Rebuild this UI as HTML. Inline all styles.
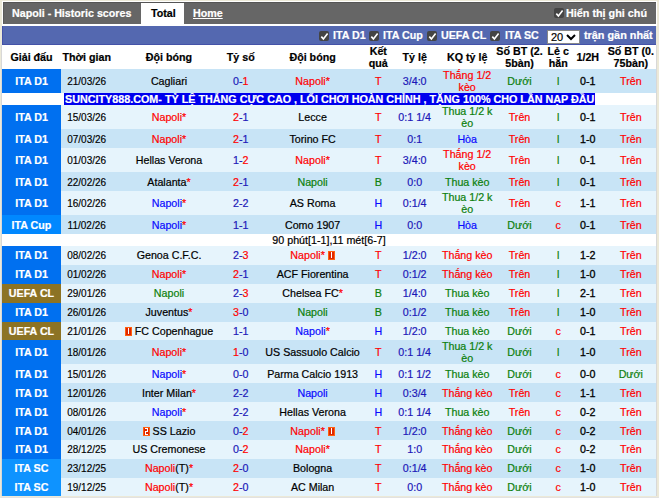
<!DOCTYPE html><html><head><meta charset="utf-8"><style>
*{margin:0;padding:0;box-sizing:border-box}
html,body{width:659px;height:498px;overflow:hidden;background:#ece9d8;font-family:"Liberation Sans",sans-serif;font-size:10.7px;color:#000;-webkit-text-stroke:0.2px}
.a{position:absolute}
.row{position:absolute;left:2px;width:654px}
.c{position:absolute;top:0;height:100%;display:flex;align-items:center;justify-content:center;text-align:center;white-space:nowrap;line-height:12px}
.lg{left:0;width:59px;color:#fff;font-weight:bold}
.d1{background:#c8e4f6}.d2{background:#e6f4fc}
.rc{display:inline-block;vertical-align:-1px}
.cb{position:absolute;width:10px;height:10px;background:#444;border-radius:2px}
.cb svg{position:absolute;left:1px;top:1px}
.hd .c{font-weight:bold}
.in{font-weight:inherit;display:block}
.c .in{position:relative;top:var(--dy)}
.h2{color:#000;-webkit-text-stroke:0.3px #000}
</style></head><body>

<div class="a" style="left:1px;top:45px;width:1px;height:451px;background:#d8d8d8"></div>
<div class="a" style="left:656px;top:45px;width:1px;height:451px;background:#d8d8d8"></div>
<div class="a" style="left:2px;top:1px;width:655px;height:25px;background:#fff"></div>
<div class="a" style="left:3px;top:2px;width:653px;height:22px;background:#666;border-top:1px solid #555;border-left:1px solid #5a5a5a"></div>
<div class="a" style="left:141px;top:3px;width:43px;height:22px;background:#fff"></div>
<div class="a" style="left:12px;top:6px;font-weight:bold;color:#fff;font-size:10.7px;line-height:14px">Napoli - Historic scores</div>
<div class="a" style="left:151px;top:6px;font-weight:bold;color:#000;font-size:10.7px;line-height:14px">Total</div>
<div class="a" style="left:193px;top:6px;font-weight:bold;color:#fff;font-size:10.7px;line-height:14px;text-decoration:underline">Home</div>
<div class="cb" style="left:554px;top:8px"><svg width="9" height="9" viewBox="0 0 9 9" style="left:0.5px;top:0.5px"><path d="M1.3 4.6 L3.4 6.9 L7.6 1.6" stroke="#fff" stroke-width="1.6" fill="none"/></svg></div>
<div class="a" style="left:566px;top:6px;font-weight:bold;color:#fff;font-size:10.8px;line-height:14px">Hiển thị ghi chú</div>
<div class="a" style="left:2px;top:26px;width:654px;height:19px;background:#5468b0;border-left:1px solid #4452a8;border-bottom:1px solid #4452a8"></div>
<div class="cb" style="left:319px;top:31px"><svg width="9" height="9" viewBox="0 0 9 9" style="left:0.5px;top:0.5px"><path d="M1.3 4.6 L3.4 6.9 L7.6 1.6" stroke="#fff" stroke-width="1.6" fill="none"/></svg></div>
<div class="a" style="left:333px;top:28px;font-weight:bold;color:#fff;line-height:14px">ITA D1</div>
<div class="cb" style="left:369px;top:31px"><svg width="9" height="9" viewBox="0 0 9 9" style="left:0.5px;top:0.5px"><path d="M1.3 4.6 L3.4 6.9 L7.6 1.6" stroke="#fff" stroke-width="1.6" fill="none"/></svg></div>
<div class="a" style="left:383px;top:28px;font-weight:bold;color:#fff;line-height:14px">ITA Cup</div>
<div class="cb" style="left:427px;top:31px"><svg width="9" height="9" viewBox="0 0 9 9" style="left:0.5px;top:0.5px"><path d="M1.3 4.6 L3.4 6.9 L7.6 1.6" stroke="#fff" stroke-width="1.6" fill="none"/></svg></div>
<div class="a" style="left:441px;top:28px;font-weight:bold;color:#fff;line-height:14px">UEFA CL</div>
<div class="cb" style="left:490px;top:31px"><svg width="9" height="9" viewBox="0 0 9 9" style="left:0.5px;top:0.5px"><path d="M1.3 4.6 L3.4 6.9 L7.6 1.6" stroke="#fff" stroke-width="1.6" fill="none"/></svg></div>
<div class="a" style="left:505px;top:28px;font-weight:bold;color:#fff;line-height:14px">ITA SC</div>
<div class="a" style="left:547px;top:30px;width:33px;height:14px;background:#fff;border:1px solid #888"></div>
<div class="a" style="left:551px;top:30px;color:#000;line-height:14px;font-size:11px">20</div>
<svg class="a" style="left:566px;top:34px" width="10" height="7" viewBox="0 0 10 7"><path d="M1 1 L5 5 L9 1" stroke="#000" stroke-width="2" fill="none"/></svg>
<div class="a" style="left:584px;top:28px;font-weight:bold;color:#fff;font-size:10.85px;line-height:14px">trận gần nhất</div>
<div class="a" style="left:2px;top:45px;width:654px;height:451px;background:#fff"></div>
<div class="row hd" style="top:45px;height:24px">
<div class="c" style="left:0.0px;width:59px">Giải đấu</div>
<div class="c" style="left:58.7px;width:52px">Thời gian</div>
<div class="c" style="left:111.0px;width:112px">Đội bóng</div>
<div class="c" style="left:222.8px;width:32px">Tỷ số</div>
<div class="c" style="left:255.1px;width:111px">Đội bóng</div>
<div class="c" style="left:365.8px;width:21px">Kết<br>quả</div>
<div class="c" style="left:387.2px;width:51px">Tỷ lệ</div>
<div class="c" style="left:437.7px;width:55px">KQ tỷ lệ</div>
<div class="c" style="left:492.5px;width:50px">Số BT (2.<br>5bàn)</div>
<div class="c" style="left:542.7px;width:27px">Lẻ c<br>hẵn</div>
<div class="c" style="left:570.3px;width:31px">1/2H</div>
<div class="c" style="left:602.8px;width:52px">Số BT (0.<br>75bàn)</div>
</div>
<div class="a" style="left:64px;top:93px;height:12px;background:#0000ee;color:#fff;font-weight:bold;font-size:10.78px;line-height:12px;white-space:nowrap;padding:0 1px">SUNCITY888.COM- TỶ LỆ THẮNG CỰC CAO , LỐI CHƠI HOÀN CHỈNH , TẶNG 100% CHO LẦN NẠP ĐẦU</div>
<div class="a" style="left:2px;top:234px;width:654px;height:12px;text-align:center;line-height:12px;white-space:nowrap">90 phút[1-1],11 mét[6-7]</div>
<div class="row d1" style="top:69px;height:24px;--dy:0px">
<div class="c lg" style="background:#0070f0"><b class="in">ITA D1</b></div>
<div class="c" style="left:58.7px;width:52px;font-size:10px;padding-top:2px;-webkit-text-stroke:0.15px;"><b class="in">21/03/26</b></div>
<div class="c" style="left:111.0px;width:112px;"><b class="in"><span style="color:#000000;">Cagliari</span></b></div>
<div class="c" style="left:222.8px;width:32px;"><b class="in"><span style="color:#1c18b8;">0-</span><span style="color:#ff0000;">1</span></b></div>
<div class="c" style="left:255.1px;width:111px;"><b class="in"><span style="color:#ff0000;">Napoli</span><span style="color:#ff0000;">*</span></b></div>
<div class="c" style="left:365.8px;width:21px;"><b class="in"><span style="color:#ff0000;">T</span></b></div>
<div class="c" style="left:387.2px;width:51px;"><b class="in"><span style="color:#1c18b8;">3/4:0</span></b></div>
<div class="c" style="left:437.7px;width:55px;"><b class="in"><span style="color:#ff0000;">Thắng 1/2<br>kèo</span></b></div>
<div class="c" style="left:492.5px;width:50px;"><b class="in"><span style="color:#0c800c;">Dưới</span></b></div>
<div class="c" style="left:542.7px;width:27px;"><b class="in"><span style="color:#0c800c;">l</span></b></div>
<div class="c" style="left:570.3px;width:31px;"><b class="in"><span class="h2">0-1</span></b></div>
<div class="c" style="left:602.8px;width:52px;"><b class="in"><span style="color:#ff0000;">Trên</span></b></div>
</div>
<div class="row d2" style="top:105px;height:24px;--dy:0px">
<div class="c lg" style="background:#0070f0"><b class="in">ITA D1</b></div>
<div class="c" style="left:58.7px;width:52px;font-size:10px;padding-top:2px;-webkit-text-stroke:0.15px;"><b class="in">15/03/26</b></div>
<div class="c" style="left:111.0px;width:112px;"><b class="in"><span style="color:#ff0000;">Napoli</span><span style="color:#ff0000;">*</span></b></div>
<div class="c" style="left:222.8px;width:32px;"><b class="in"><span style="color:#ff0000;">2</span><span style="color:#1c18b8;">-1</span></b></div>
<div class="c" style="left:255.1px;width:111px;"><b class="in"><span style="color:#000000;">Lecce</span></b></div>
<div class="c" style="left:365.8px;width:21px;"><b class="in"><span style="color:#ff0000;">T</span></b></div>
<div class="c" style="left:387.2px;width:51px;"><b class="in"><span style="color:#1c18b8;">0:1 1/4</span></b></div>
<div class="c" style="left:437.7px;width:55px;"><b class="in"><span style="color:#0c800c;">Thua 1/2 k<br>èo</span></b></div>
<div class="c" style="left:492.5px;width:50px;"><b class="in"><span style="color:#ff0000;">Trên</span></b></div>
<div class="c" style="left:542.7px;width:27px;"><b class="in"><span style="color:#0c800c;">l</span></b></div>
<div class="c" style="left:570.3px;width:31px;"><b class="in"><span class="h2">0-1</span></b></div>
<div class="c" style="left:602.8px;width:52px;"><b class="in"><span style="color:#ff0000;">Trên</span></b></div>
</div>
<div class="row d1" style="top:129px;height:19px;--dy:0px">
<div class="c lg" style="background:#0070f0"><b class="in">ITA D1</b></div>
<div class="c" style="left:58.7px;width:52px;font-size:10px;padding-top:2px;-webkit-text-stroke:0.15px;"><b class="in">07/03/26</b></div>
<div class="c" style="left:111.0px;width:112px;"><b class="in"><span style="color:#ff0000;">Napoli</span><span style="color:#ff0000;">*</span></b></div>
<div class="c" style="left:222.8px;width:32px;"><b class="in"><span style="color:#ff0000;">2</span><span style="color:#1c18b8;">-1</span></b></div>
<div class="c" style="left:255.1px;width:111px;"><b class="in"><span style="color:#000000;">Torino FC</span></b></div>
<div class="c" style="left:365.8px;width:21px;"><b class="in"><span style="color:#ff0000;">T</span></b></div>
<div class="c" style="left:387.2px;width:51px;"><b class="in"><span style="color:#1c18b8;">0:1</span></b></div>
<div class="c" style="left:437.7px;width:55px;"><b class="in"><span style="color:#0a0aff;">Hòa</span></b></div>
<div class="c" style="left:492.5px;width:50px;"><b class="in"><span style="color:#ff0000;">Trên</span></b></div>
<div class="c" style="left:542.7px;width:27px;"><b class="in"><span style="color:#0c800c;">l</span></b></div>
<div class="c" style="left:570.3px;width:31px;"><b class="in"><span class="h2">1-0</span></b></div>
<div class="c" style="left:602.8px;width:52px;"><b class="in"><span style="color:#ff0000;">Trên</span></b></div>
</div>
<div class="row d2" style="top:148px;height:24px;--dy:0px">
<div class="c lg" style="background:#0070f0"><b class="in">ITA D1</b></div>
<div class="c" style="left:58.7px;width:52px;font-size:10px;padding-top:2px;-webkit-text-stroke:0.15px;"><b class="in">01/03/26</b></div>
<div class="c" style="left:111.0px;width:112px;"><b class="in"><span style="color:#000000;">Hellas Verona</span></b></div>
<div class="c" style="left:222.8px;width:32px;"><b class="in"><span style="color:#1c18b8;">1-</span><span style="color:#ff0000;">2</span></b></div>
<div class="c" style="left:255.1px;width:111px;"><b class="in"><span style="color:#ff0000;">Napoli</span><span style="color:#ff0000;">*</span></b></div>
<div class="c" style="left:365.8px;width:21px;"><b class="in"><span style="color:#ff0000;">T</span></b></div>
<div class="c" style="left:387.2px;width:51px;"><b class="in"><span style="color:#1c18b8;">3/4:0</span></b></div>
<div class="c" style="left:437.7px;width:55px;"><b class="in"><span style="color:#ff0000;">Thắng 1/2<br>kèo</span></b></div>
<div class="c" style="left:492.5px;width:50px;"><b class="in"><span style="color:#ff0000;">Trên</span></b></div>
<div class="c" style="left:542.7px;width:27px;"><b class="in"><span style="color:#0c800c;">l</span></b></div>
<div class="c" style="left:570.3px;width:31px;"><b class="in"><span class="h2">0-1</span></b></div>
<div class="c" style="left:602.8px;width:52px;"><b class="in"><span style="color:#ff0000;">Trên</span></b></div>
</div>
<div class="row d1" style="top:172px;height:19px;--dy:0px">
<div class="c lg" style="background:#0070f0"><b class="in">ITA D1</b></div>
<div class="c" style="left:58.7px;width:52px;font-size:10px;padding-top:2px;-webkit-text-stroke:0.15px;"><b class="in">22/02/26</b></div>
<div class="c" style="left:111.0px;width:112px;"><b class="in"><span style="color:#000000;">Atalanta</span><span style="color:#ff0000;">*</span></b></div>
<div class="c" style="left:222.8px;width:32px;"><b class="in"><span style="color:#ff0000;">2</span><span style="color:#1c18b8;">-1</span></b></div>
<div class="c" style="left:255.1px;width:111px;"><b class="in"><span style="color:#0c800c;">Napoli</span></b></div>
<div class="c" style="left:365.8px;width:21px;"><b class="in"><span style="color:#0c800c;">B</span></b></div>
<div class="c" style="left:387.2px;width:51px;"><b class="in"><span style="color:#1c18b8;">0:0</span></b></div>
<div class="c" style="left:437.7px;width:55px;"><b class="in"><span style="color:#0c800c;">Thua kèo</span></b></div>
<div class="c" style="left:492.5px;width:50px;"><b class="in"><span style="color:#ff0000;">Trên</span></b></div>
<div class="c" style="left:542.7px;width:27px;"><b class="in"><span style="color:#0c800c;">l</span></b></div>
<div class="c" style="left:570.3px;width:31px;"><b class="in"><span class="h2">0-1</span></b></div>
<div class="c" style="left:602.8px;width:52px;"><b class="in"><span style="color:#ff0000;">Trên</span></b></div>
</div>
<div class="row d2" style="top:191px;height:24px;--dy:0px">
<div class="c lg" style="background:#0070f0"><b class="in">ITA D1</b></div>
<div class="c" style="left:58.7px;width:52px;font-size:10px;padding-top:2px;-webkit-text-stroke:0.15px;"><b class="in">16/02/26</b></div>
<div class="c" style="left:111.0px;width:112px;"><b class="in"><span style="color:#0a0aff;">Napoli</span><span style="color:#ff0000;">*</span></b></div>
<div class="c" style="left:222.8px;width:32px;"><b class="in"><span style="color:#1c18b8;">2-2</span></b></div>
<div class="c" style="left:255.1px;width:111px;"><b class="in"><span style="color:#000000;">AS Roma</span></b></div>
<div class="c" style="left:365.8px;width:21px;"><b class="in"><span style="color:#0a0aff;">H</span></b></div>
<div class="c" style="left:387.2px;width:51px;"><b class="in"><span style="color:#1c18b8;">0:1/4</span></b></div>
<div class="c" style="left:437.7px;width:55px;"><b class="in"><span style="color:#0c800c;">Thua 1/2 k<br>èo</span></b></div>
<div class="c" style="left:492.5px;width:50px;"><b class="in"><span style="color:#ff0000;">Trên</span></b></div>
<div class="c" style="left:542.7px;width:27px;"><b class="in"><span style="color:#ff0000;">c</span></b></div>
<div class="c" style="left:570.3px;width:31px;"><b class="in"><span class="h2">1-1</span></b></div>
<div class="c" style="left:602.8px;width:52px;"><b class="in"><span style="color:#ff0000;">Trên</span></b></div>
</div>
<div class="row d1" style="top:215px;height:19px;--dy:0px">
<div class="c lg" style="background:#0088ff"><b class="in">ITA Cup</b></div>
<div class="c" style="left:58.7px;width:52px;font-size:10px;padding-top:2px;-webkit-text-stroke:0.15px;"><b class="in">11/02/26</b></div>
<div class="c" style="left:111.0px;width:112px;"><b class="in"><span style="color:#0a0aff;">Napoli</span><span style="color:#ff0000;">*</span></b></div>
<div class="c" style="left:222.8px;width:32px;"><b class="in"><span style="color:#1c18b8;">1-1</span></b></div>
<div class="c" style="left:255.1px;width:111px;"><b class="in"><span style="color:#000000;">Como 1907</span></b></div>
<div class="c" style="left:365.8px;width:21px;"><b class="in"><span style="color:#0a0aff;">H</span></b></div>
<div class="c" style="left:387.2px;width:51px;"><b class="in"><span style="color:#1c18b8;">0:0</span></b></div>
<div class="c" style="left:437.7px;width:55px;"><b class="in"><span style="color:#0a0aff;">Hòa</span></b></div>
<div class="c" style="left:492.5px;width:50px;"><b class="in"><span style="color:#0c800c;">Dưới</span></b></div>
<div class="c" style="left:542.7px;width:27px;"><b class="in"><span style="color:#ff0000;">c</span></b></div>
<div class="c" style="left:570.3px;width:31px;"><b class="in"><span class="h2">0-1</span></b></div>
<div class="c" style="left:602.8px;width:52px;"><b class="in"><span style="color:#ff0000;">Trên</span></b></div>
</div>
<div class="row d2" style="top:246px;height:19px;--dy:-1px">
<div class="c lg" style="background:#0070f0"><b class="in">ITA D1</b></div>
<div class="c" style="left:58.7px;width:52px;font-size:10px;padding-top:2px;-webkit-text-stroke:0.15px;"><b class="in">08/02/26</b></div>
<div class="c" style="left:111.0px;width:112px;"><b class="in"><span style="color:#000000;">Genoa C.F.C.</span></b></div>
<div class="c" style="left:222.8px;width:32px;"><b class="in"><span style="color:#1c18b8;">2-</span><span style="color:#ff0000;">3</span></b></div>
<div class="c" style="left:255.1px;width:111px;"><b class="in"><span style="color:#ff0000;">Napoli</span><span style="color:#ff0000;">*</span> <svg class="rc" width="7" height="9" viewBox="0 0 7 9"><rect width="7" height="9" fill="#ff6010"/><rect x="1" y="1" width="5" height="7" fill="#e02800"/><rect x="3" y="1" width="1" height="6" fill="#fff"/></svg></b></div>
<div class="c" style="left:365.8px;width:21px;"><b class="in"><span style="color:#ff0000;">T</span></b></div>
<div class="c" style="left:387.2px;width:51px;"><b class="in"><span style="color:#1c18b8;">1/2:0</span></b></div>
<div class="c" style="left:437.7px;width:55px;"><b class="in"><span style="color:#ff0000;">Thắng kèo</span></b></div>
<div class="c" style="left:492.5px;width:50px;"><b class="in"><span style="color:#ff0000;">Trên</span></b></div>
<div class="c" style="left:542.7px;width:27px;"><b class="in"><span style="color:#0c800c;">l</span></b></div>
<div class="c" style="left:570.3px;width:31px;"><b class="in"><span class="h2">1-2</span></b></div>
<div class="c" style="left:602.8px;width:52px;"><b class="in"><span style="color:#ff0000;">Trên</span></b></div>
</div>
<div class="row d1" style="top:265px;height:19px;--dy:-1px">
<div class="c lg" style="background:#0070f0"><b class="in">ITA D1</b></div>
<div class="c" style="left:58.7px;width:52px;font-size:10px;padding-top:2px;-webkit-text-stroke:0.15px;"><b class="in">01/02/26</b></div>
<div class="c" style="left:111.0px;width:112px;"><b class="in"><span style="color:#ff0000;">Napoli</span><span style="color:#ff0000;">*</span></b></div>
<div class="c" style="left:222.8px;width:32px;"><b class="in"><span style="color:#ff0000;">2</span><span style="color:#1c18b8;">-1</span></b></div>
<div class="c" style="left:255.1px;width:111px;"><b class="in"><span style="color:#000000;">ACF Fiorentina</span></b></div>
<div class="c" style="left:365.8px;width:21px;"><b class="in"><span style="color:#ff0000;">T</span></b></div>
<div class="c" style="left:387.2px;width:51px;"><b class="in"><span style="color:#1c18b8;">0:1/2</span></b></div>
<div class="c" style="left:437.7px;width:55px;"><b class="in"><span style="color:#ff0000;">Thắng kèo</span></b></div>
<div class="c" style="left:492.5px;width:50px;"><b class="in"><span style="color:#ff0000;">Trên</span></b></div>
<div class="c" style="left:542.7px;width:27px;"><b class="in"><span style="color:#0c800c;">l</span></b></div>
<div class="c" style="left:570.3px;width:31px;"><b class="in"><span class="h2">1-0</span></b></div>
<div class="c" style="left:602.8px;width:52px;"><b class="in"><span style="color:#ff0000;">Trên</span></b></div>
</div>
<div class="row d2" style="top:284px;height:19px;--dy:-1px">
<div class="c lg" style="background:#8c7324"><b class="in">UEFA CL</b></div>
<div class="c" style="left:58.7px;width:52px;font-size:10px;padding-top:2px;-webkit-text-stroke:0.15px;"><b class="in">29/01/26</b></div>
<div class="c" style="left:111.0px;width:112px;"><b class="in"><span style="color:#0c800c;">Napoli</span></b></div>
<div class="c" style="left:222.8px;width:32px;"><b class="in"><span style="color:#1c18b8;">2-</span><span style="color:#ff0000;">3</span></b></div>
<div class="c" style="left:255.1px;width:111px;"><b class="in"><span style="color:#000000;">Chelsea FC</span><span style="color:#ff0000;">*</span></b></div>
<div class="c" style="left:365.8px;width:21px;"><b class="in"><span style="color:#0c800c;">B</span></b></div>
<div class="c" style="left:387.2px;width:51px;"><b class="in"><span style="color:#1c18b8;">1/4:0</span></b></div>
<div class="c" style="left:437.7px;width:55px;"><b class="in"><span style="color:#0c800c;">Thua kèo</span></b></div>
<div class="c" style="left:492.5px;width:50px;"><b class="in"><span style="color:#ff0000;">Trên</span></b></div>
<div class="c" style="left:542.7px;width:27px;"><b class="in"><span style="color:#0c800c;">l</span></b></div>
<div class="c" style="left:570.3px;width:31px;"><b class="in"><span class="h2">2-1</span></b></div>
<div class="c" style="left:602.8px;width:52px;"><b class="in"><span style="color:#ff0000;">Trên</span></b></div>
</div>
<div class="row d1" style="top:303px;height:19px;--dy:-1px">
<div class="c lg" style="background:#0070f0"><b class="in">ITA D1</b></div>
<div class="c" style="left:58.7px;width:52px;font-size:10px;padding-top:2px;-webkit-text-stroke:0.15px;"><b class="in">26/01/26</b></div>
<div class="c" style="left:111.0px;width:112px;"><b class="in"><span style="color:#000000;">Juventus</span><span style="color:#ff0000;">*</span></b></div>
<div class="c" style="left:222.8px;width:32px;"><b class="in"><span style="color:#ff0000;">3</span><span style="color:#1c18b8;">-0</span></b></div>
<div class="c" style="left:255.1px;width:111px;"><b class="in"><span style="color:#0c800c;">Napoli</span></b></div>
<div class="c" style="left:365.8px;width:21px;"><b class="in"><span style="color:#0c800c;">B</span></b></div>
<div class="c" style="left:387.2px;width:51px;"><b class="in"><span style="color:#1c18b8;">0:1/2</span></b></div>
<div class="c" style="left:437.7px;width:55px;"><b class="in"><span style="color:#0c800c;">Thua kèo</span></b></div>
<div class="c" style="left:492.5px;width:50px;"><b class="in"><span style="color:#ff0000;">Trên</span></b></div>
<div class="c" style="left:542.7px;width:27px;"><b class="in"><span style="color:#0c800c;">l</span></b></div>
<div class="c" style="left:570.3px;width:31px;"><b class="in"><span class="h2">1-0</span></b></div>
<div class="c" style="left:602.8px;width:52px;"><b class="in"><span style="color:#ff0000;">Trên</span></b></div>
</div>
<div class="row d2" style="top:322px;height:18px;--dy:0px">
<div class="c lg" style="background:#8c7324"><b class="in">UEFA CL</b></div>
<div class="c" style="left:58.7px;width:52px;font-size:10px;padding-top:2px;-webkit-text-stroke:0.15px;"><b class="in">21/01/26</b></div>
<div class="c" style="left:111.0px;width:112px;"><b class="in"><svg class="rc" width="7" height="9" viewBox="0 0 7 9"><rect width="7" height="9" fill="#ff6010"/><rect x="1" y="1" width="5" height="7" fill="#e02800"/><rect x="3" y="1" width="1" height="6" fill="#fff"/></svg> <span style="color:#000000;">FC Copenhague</span></b></div>
<div class="c" style="left:222.8px;width:32px;"><b class="in"><span style="color:#1c18b8;">1-1</span></b></div>
<div class="c" style="left:255.1px;width:111px;"><b class="in"><span style="color:#0a0aff;">Napoli</span><span style="color:#ff0000;">*</span></b></div>
<div class="c" style="left:365.8px;width:21px;"><b class="in"><span style="color:#0a0aff;">H</span></b></div>
<div class="c" style="left:387.2px;width:51px;"><b class="in"><span style="color:#1c18b8;">1/2:0</span></b></div>
<div class="c" style="left:437.7px;width:55px;"><b class="in"><span style="color:#0c800c;">Thua kèo</span></b></div>
<div class="c" style="left:492.5px;width:50px;"><b class="in"><span style="color:#0c800c;">Dưới</span></b></div>
<div class="c" style="left:542.7px;width:27px;"><b class="in"><span style="color:#ff0000;">c</span></b></div>
<div class="c" style="left:570.3px;width:31px;"><b class="in"><span class="h2">0-1</span></b></div>
<div class="c" style="left:602.8px;width:52px;"><b class="in"><span style="color:#ff0000;">Trên</span></b></div>
</div>
<div class="row d1" style="top:340px;height:24px;--dy:0px">
<div class="c lg" style="background:#0070f0"><b class="in">ITA D1</b></div>
<div class="c" style="left:58.7px;width:52px;font-size:10px;padding-top:2px;-webkit-text-stroke:0.15px;"><b class="in">18/01/26</b></div>
<div class="c" style="left:111.0px;width:112px;"><b class="in"><span style="color:#ff0000;">Napoli</span><span style="color:#ff0000;">*</span></b></div>
<div class="c" style="left:222.8px;width:32px;"><b class="in"><span style="color:#ff0000;">1</span><span style="color:#1c18b8;">-0</span></b></div>
<div class="c" style="left:255.1px;width:111px;"><b class="in"><span style="color:#000000;">US Sassuolo Calcio</span></b></div>
<div class="c" style="left:365.8px;width:21px;"><b class="in"><span style="color:#ff0000;">T</span></b></div>
<div class="c" style="left:387.2px;width:51px;"><b class="in"><span style="color:#1c18b8;">0:1 1/4</span></b></div>
<div class="c" style="left:437.7px;width:55px;"><b class="in"><span style="color:#0c800c;">Thua 1/2 k<br>èo</span></b></div>
<div class="c" style="left:492.5px;width:50px;"><b class="in"><span style="color:#0c800c;">Dưới</span></b></div>
<div class="c" style="left:542.7px;width:27px;"><b class="in"><span style="color:#0c800c;">l</span></b></div>
<div class="c" style="left:570.3px;width:31px;"><b class="in"><span class="h2">1-0</span></b></div>
<div class="c" style="left:602.8px;width:52px;"><b class="in"><span style="color:#ff0000;">Trên</span></b></div>
</div>
<div class="row d2" style="top:364px;height:19px;--dy:0px">
<div class="c lg" style="background:#0070f0"><b class="in">ITA D1</b></div>
<div class="c" style="left:58.7px;width:52px;font-size:10px;padding-top:2px;-webkit-text-stroke:0.15px;"><b class="in">15/01/26</b></div>
<div class="c" style="left:111.0px;width:112px;"><b class="in"><span style="color:#0a0aff;">Napoli</span><span style="color:#ff0000;">*</span></b></div>
<div class="c" style="left:222.8px;width:32px;"><b class="in"><span style="color:#1c18b8;">0-0</span></b></div>
<div class="c" style="left:255.1px;width:111px;"><b class="in"><span style="color:#000000;">Parma Calcio 1913</span></b></div>
<div class="c" style="left:365.8px;width:21px;"><b class="in"><span style="color:#0a0aff;">H</span></b></div>
<div class="c" style="left:387.2px;width:51px;"><b class="in"><span style="color:#1c18b8;">0:1 1/2</span></b></div>
<div class="c" style="left:437.7px;width:55px;"><b class="in"><span style="color:#0c800c;">Thua kèo</span></b></div>
<div class="c" style="left:492.5px;width:50px;"><b class="in"><span style="color:#0c800c;">Dưới</span></b></div>
<div class="c" style="left:542.7px;width:27px;"><b class="in"><span style="color:#ff0000;">c</span></b></div>
<div class="c" style="left:570.3px;width:31px;"><b class="in"><span class="h2">0-0</span></b></div>
<div class="c" style="left:602.8px;width:52px;"><b class="in"><span style="color:#0c800c;">Dưới</span></b></div>
</div>
<div class="row d1" style="top:383px;height:19px;--dy:0px">
<div class="c lg" style="background:#0070f0"><b class="in">ITA D1</b></div>
<div class="c" style="left:58.7px;width:52px;font-size:10px;padding-top:2px;-webkit-text-stroke:0.15px;"><b class="in">12/01/26</b></div>
<div class="c" style="left:111.0px;width:112px;"><b class="in"><span style="color:#000000;">Inter Milan</span><span style="color:#ff0000;">*</span></b></div>
<div class="c" style="left:222.8px;width:32px;"><b class="in"><span style="color:#1c18b8;">2-2</span></b></div>
<div class="c" style="left:255.1px;width:111px;"><b class="in"><span style="color:#0a0aff;">Napoli</span></b></div>
<div class="c" style="left:365.8px;width:21px;"><b class="in"><span style="color:#0a0aff;">H</span></b></div>
<div class="c" style="left:387.2px;width:51px;"><b class="in"><span style="color:#1c18b8;">0:3/4</span></b></div>
<div class="c" style="left:437.7px;width:55px;"><b class="in"><span style="color:#ff0000;">Thắng kèo</span></b></div>
<div class="c" style="left:492.5px;width:50px;"><b class="in"><span style="color:#ff0000;">Trên</span></b></div>
<div class="c" style="left:542.7px;width:27px;"><b class="in"><span style="color:#ff0000;">c</span></b></div>
<div class="c" style="left:570.3px;width:31px;"><b class="in"><span class="h2">1-1</span></b></div>
<div class="c" style="left:602.8px;width:52px;"><b class="in"><span style="color:#ff0000;">Trên</span></b></div>
</div>
<div class="row d2" style="top:402px;height:19px;--dy:0px">
<div class="c lg" style="background:#0070f0"><b class="in">ITA D1</b></div>
<div class="c" style="left:58.7px;width:52px;font-size:10px;padding-top:2px;-webkit-text-stroke:0.15px;"><b class="in">08/01/26</b></div>
<div class="c" style="left:111.0px;width:112px;"><b class="in"><span style="color:#0a0aff;">Napoli</span><span style="color:#ff0000;">*</span></b></div>
<div class="c" style="left:222.8px;width:32px;"><b class="in"><span style="color:#1c18b8;">2-2</span></b></div>
<div class="c" style="left:255.1px;width:111px;"><b class="in"><span style="color:#000000;">Hellas Verona</span></b></div>
<div class="c" style="left:365.8px;width:21px;"><b class="in"><span style="color:#0a0aff;">H</span></b></div>
<div class="c" style="left:387.2px;width:51px;"><b class="in"><span style="color:#1c18b8;">0:1 1/4</span></b></div>
<div class="c" style="left:437.7px;width:55px;"><b class="in"><span style="color:#0c800c;">Thua kèo</span></b></div>
<div class="c" style="left:492.5px;width:50px;"><b class="in"><span style="color:#ff0000;">Trên</span></b></div>
<div class="c" style="left:542.7px;width:27px;"><b class="in"><span style="color:#ff0000;">c</span></b></div>
<div class="c" style="left:570.3px;width:31px;"><b class="in"><span class="h2">0-2</span></b></div>
<div class="c" style="left:602.8px;width:52px;"><b class="in"><span style="color:#ff0000;">Trên</span></b></div>
</div>
<div class="row d1" style="top:421px;height:19px;--dy:0px">
<div class="c lg" style="background:#0070f0"><b class="in">ITA D1</b></div>
<div class="c" style="left:58.7px;width:52px;font-size:10px;padding-top:2px;-webkit-text-stroke:0.15px;"><b class="in">04/01/26</b></div>
<div class="c" style="left:111.0px;width:112px;"><b class="in"><svg class="rc" width="7" height="9" viewBox="0 0 7 9"><rect width="7" height="9" fill="#ff6010"/><rect x="1" y="1" width="5" height="7" fill="#e02800"/><path d="M2 1h3v4h-2v2h2v1h-3v-4h2v-2h-2z" fill="#fff"/></svg> <span style="color:#000000;">SS Lazio</span></b></div>
<div class="c" style="left:222.8px;width:32px;"><b class="in"><span style="color:#1c18b8;">0-</span><span style="color:#ff0000;">2</span></b></div>
<div class="c" style="left:255.1px;width:111px;"><b class="in"><span style="color:#ff0000;">Napoli</span><span style="color:#ff0000;">*</span> <svg class="rc" width="7" height="9" viewBox="0 0 7 9"><rect width="7" height="9" fill="#ff6010"/><rect x="1" y="1" width="5" height="7" fill="#e02800"/><rect x="3" y="1" width="1" height="6" fill="#fff"/></svg></b></div>
<div class="c" style="left:365.8px;width:21px;"><b class="in"><span style="color:#ff0000;">T</span></b></div>
<div class="c" style="left:387.2px;width:51px;"><b class="in"><span style="color:#1c18b8;">1/2:0</span></b></div>
<div class="c" style="left:437.7px;width:55px;"><b class="in"><span style="color:#ff0000;">Thắng kèo</span></b></div>
<div class="c" style="left:492.5px;width:50px;"><b class="in"><span style="color:#0c800c;">Dưới</span></b></div>
<div class="c" style="left:542.7px;width:27px;"><b class="in"><span style="color:#ff0000;">c</span></b></div>
<div class="c" style="left:570.3px;width:31px;"><b class="in"><span class="h2">0-2</span></b></div>
<div class="c" style="left:602.8px;width:52px;"><b class="in"><span style="color:#ff0000;">Trên</span></b></div>
</div>
<div class="row d2" style="top:440px;height:19px;--dy:-1px">
<div class="c lg" style="background:#0070f0"><b class="in">ITA D1</b></div>
<div class="c" style="left:58.7px;width:52px;font-size:10px;padding-top:2px;-webkit-text-stroke:0.15px;"><b class="in">28/12/25</b></div>
<div class="c" style="left:111.0px;width:112px;"><b class="in"><span style="color:#000000;">US Cremonese</span></b></div>
<div class="c" style="left:222.8px;width:32px;"><b class="in"><span style="color:#1c18b8;">0-</span><span style="color:#ff0000;">2</span></b></div>
<div class="c" style="left:255.1px;width:111px;"><b class="in"><span style="color:#ff0000;">Napoli</span><span style="color:#ff0000;">*</span></b></div>
<div class="c" style="left:365.8px;width:21px;"><b class="in"><span style="color:#ff0000;">T</span></b></div>
<div class="c" style="left:387.2px;width:51px;"><b class="in"><span style="color:#1c18b8;">1:0</span></b></div>
<div class="c" style="left:437.7px;width:55px;"><b class="in"><span style="color:#ff0000;">Thắng kèo</span></b></div>
<div class="c" style="left:492.5px;width:50px;"><b class="in"><span style="color:#0c800c;">Dưới</span></b></div>
<div class="c" style="left:542.7px;width:27px;"><b class="in"><span style="color:#ff0000;">c</span></b></div>
<div class="c" style="left:570.3px;width:31px;"><b class="in"><span class="h2">0-2</span></b></div>
<div class="c" style="left:602.8px;width:52px;"><b class="in"><span style="color:#ff0000;">Trên</span></b></div>
</div>
<div class="row d1" style="top:459px;height:19px;--dy:-1px">
<div class="c lg" style="background:#0e93ff"><b class="in">ITA SC</b></div>
<div class="c" style="left:58.7px;width:52px;font-size:10px;padding-top:2px;-webkit-text-stroke:0.15px;"><b class="in">23/12/25</b></div>
<div class="c" style="left:111.0px;width:112px;"><b class="in"><span style="color:#ff0000;">Napoli</span><span style="color:#000000;">(T)</span><span style="color:#ff0000;">*</span></b></div>
<div class="c" style="left:222.8px;width:32px;"><b class="in"><span style="color:#ff0000;">2</span><span style="color:#1c18b8;">-0</span></b></div>
<div class="c" style="left:255.1px;width:111px;"><b class="in"><span style="color:#000000;">Bologna</span></b></div>
<div class="c" style="left:365.8px;width:21px;"><b class="in"><span style="color:#ff0000;">T</span></b></div>
<div class="c" style="left:387.2px;width:51px;"><b class="in"><span style="color:#1c18b8;">0:1/4</span></b></div>
<div class="c" style="left:437.7px;width:55px;"><b class="in"><span style="color:#ff0000;">Thắng kèo</span></b></div>
<div class="c" style="left:492.5px;width:50px;"><b class="in"><span style="color:#0c800c;">Dưới</span></b></div>
<div class="c" style="left:542.7px;width:27px;"><b class="in"><span style="color:#ff0000;">c</span></b></div>
<div class="c" style="left:570.3px;width:31px;"><b class="in"><span class="h2">1-0</span></b></div>
<div class="c" style="left:602.8px;width:52px;"><b class="in"><span style="color:#ff0000;">Trên</span></b></div>
</div>
<div class="row d2" style="top:478px;height:18px;--dy:0px">
<div class="c lg" style="background:#0e93ff"><b class="in">ITA SC</b></div>
<div class="c" style="left:58.7px;width:52px;font-size:10px;padding-top:2px;-webkit-text-stroke:0.15px;"><b class="in">19/12/25</b></div>
<div class="c" style="left:111.0px;width:112px;"><b class="in"><span style="color:#ff0000;">Napoli</span><span style="color:#000000;">(T)</span><span style="color:#ff0000;">*</span></b></div>
<div class="c" style="left:222.8px;width:32px;"><b class="in"><span style="color:#ff0000;">2</span><span style="color:#1c18b8;">-0</span></b></div>
<div class="c" style="left:255.1px;width:111px;"><b class="in"><span style="color:#000000;">AC Milan</span></b></div>
<div class="c" style="left:365.8px;width:21px;"><b class="in"><span style="color:#ff0000;">T</span></b></div>
<div class="c" style="left:387.2px;width:51px;"><b class="in"><span style="color:#1c18b8;">0:0</span></b></div>
<div class="c" style="left:437.7px;width:55px;"><b class="in"><span style="color:#ff0000;">Thắng kèo</span></b></div>
<div class="c" style="left:492.5px;width:50px;"><b class="in"><span style="color:#0c800c;">Dưới</span></b></div>
<div class="c" style="left:542.7px;width:27px;"><b class="in"><span style="color:#ff0000;">c</span></b></div>
<div class="c" style="left:570.3px;width:31px;"><b class="in"><span class="h2">1-0</span></b></div>
<div class="c" style="left:602.8px;width:52px;"><b class="in"><span style="color:#ff0000;">Trên</span></b></div>
</div>
<div class="a" style="left:1px;top:497px;width:658px;height:1px;background:#e2e2e2"></div>
</body></html>
